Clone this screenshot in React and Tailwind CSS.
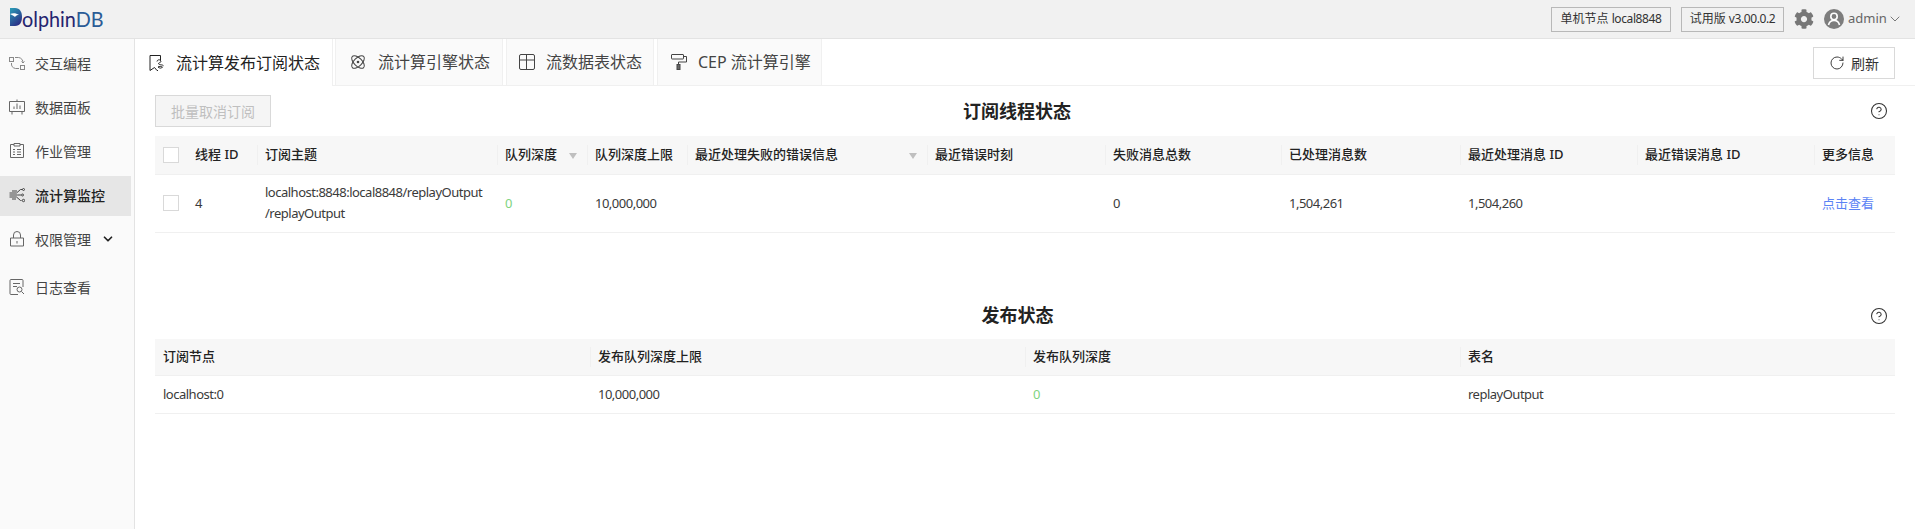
import React from "react";
import { ChevronDown, CircleHelp, RotateCw } from "lucide-react";
import { FaCog } from "react-icons/fa";

const font = { fontFamily: '"Noto Sans", "Noto Sans CJK SC", sans-serif' };

const Ic = ({ children, className = "w-4 h-4", stroke = "#666" }) => (
  <svg viewBox="0 0 16 16" fill="none" stroke={stroke} strokeWidth="1" className={`shrink-0 ${className}`}>
    {children}
  </svg>
);

const IconCode = () => (
  <Ic stroke="#888">
    <rect x="0.5" y="2.5" width="4" height="4" />
    <rect x="11.5" y="10.5" width="4" height="4" />
    <path d="M6 2.5h3.5a5 5 0 0 1 4.5 5.5M14 8l1.5-1.5M14 8l-1.5-1.5M2.500 8a5 5 0 0 0 4 5.500h3.500" />
  </Ic>
);
const IconBoard = () => (
  <Ic>
    <path d="M8 0.5v2M0.5 2.5h15v10h-15zM3 12.5v3M13 12.5v3M5 10V7.5M8 10V4.5M11 10V6.5" />
  </Ic>
);
const IconJobs = () => (
  <Ic>
    <path d="M5 1.5H1.5v13h13v-13H11M5 0.5h6v2.5H5zM4 6.5h2M8 6.5h4M4 9h2M8 9h4M4 11.5h2M8 11.5h4" />
  </Ic>
);
const IconFlow = () => (
  <Ic stroke="#444">
    <path d="M0.5 6h7l4-3.500h2M0.500 8h8l3.500 0M0.500 10h7l4 3.500h1M3 4h5M3 12h4" />
    <circle cx="14.5" cy="2.5" r="1" />
    <circle cx="13.5" cy="8" r="1" />
    <circle cx="14.5" cy="13.5" r="1.2" />
  </Ic>
);
const IconLock = () => (
  <Ic>
    <path d="M4.5 7V4a3.5 3.5 0 0 1 7 0v3M1.5 7h13v8h-13zM8 10v2.5" />
  </Ic>
);
const IconLog = () => (
  <Ic>
    <path d="M14 8V1.5a1 1 0 0 0-1-1H2a1 1 0 0 0-1 1v13a1 1 0 0 0 1 1h7M4 4.5h7M4 7.5h4" />
    <circle cx="10.5" cy="10.5" r="2.5" />
    <path d="M12.5 12.5l2.5 2.5" />
  </Ic>
);
const IconDoc = () => (
  <Ic stroke="#222">
    <path d="M11.500 5.500V0.500H1v15l4.500-3 2.500 3h1" />
    <path d="M8 6.500a2 2 0 0 1 3.500-1c1 1 0 2-1 2.200s-1.500 1.300 0 1.800c1.200.4 3 .2 4 1.200M9 12c1.500-.8 3-.8 4.500 0-1 1.500-2.500 1.500-4.500 0z" />
  </Ic>
);
const IconAtom = () => (
  <Ic stroke="#444">
    <ellipse cx="8" cy="8" rx="8" ry="4" transform="rotate(45 8 8)" />
    <ellipse cx="8" cy="8" rx="8" ry="4" transform="rotate(-45 8 8)" />
    <circle cx="8" cy="8" r="1.300" fill="#444" stroke="none" />
  </Ic>
);
const IconTable = () => (
  <Ic stroke="#444">
    <rect x="0.5" y="0.5" width="15" height="15" rx="1.5" />
    <path d="M0.5 6h15M7.500 0.500v15" />
  </Ic>
);
const IconRoller = () => (
  <Ic stroke="#444">
    <rect x="0.5" y="0.5" width="12" height="4.500" rx="0.5" />
    <path d="M12.500 2.500h3v5.500H7.500v2.500" />
    <rect x="6" y="10.500" width="3" height="5" fill="#666" />
  </Ic>
);
const IconUser = () => (
  <svg viewBox="0 0 20 20" className="w-5 h-5 shrink-0">
    <circle cx="10" cy="10" r="10" fill="#7d7d7d" />
    <circle cx="10" cy="7.5" r="3.2" fill="none" stroke="#fff" strokeWidth="1.6" />
    <path d="M4.500 16c.6-3 2.700-4.500 5.500-4.500s4.900 1.500 5.500 4.500" fill="none" stroke="#fff" strokeWidth="1.6" />
  </svg>
);
const Logo = () => (
  <div className="flex items-start h-[24px] w-[96px]">
    <svg viewBox="0 0 12 18" className="w-[12px] h-[18px] shrink-0 mt-[1px]">
      <defs>
        <linearGradient id="lg" x1="0" y1="0" x2="0.6" y2="1">
          <stop offset="0" stopColor="#2a9fb8" />
          <stop offset="1" stopColor="#2a2f86" />
        </linearGradient>
      </defs>
      <path d="M0 0h5c5 0 7 4 7 9s-2 9-7 9H0z" fill="url(#lg)" />
      <path d="M0 6c3-1 6-1 9 1-2 0-3 .5-4 2C4 8 2 7 0 6z" fill="#fff" />
    </svg>
    <span className="text-[22px] leading-[24px] text-[#25246f] inline-block origin-left scale-x-[0.9] whitespace-nowrap" style={{ fontFamily: '"Lato", sans-serif' }}>
      olphin<span className="text-[#2b5c96]">DB</span>
    </span>
  </div>
);

const nav = [
  { label: "交互编程", icon: IconCode },
  { label: "数据面板", icon: IconBoard },
  { label: "作业管理", icon: IconJobs },
  { label: "流计算监控", icon: IconFlow, active: true },
  { label: "权限管理", icon: IconLock, chevron: true },
  { label: "日志查看", icon: IconLog, last: true },
];

const Sep = () => <span className="absolute left-0 top-[9px] h-[20px] w-px bg-[#f0f0f0]" />;
const Sort = () => (
  <svg viewBox="0 0 8 6" className="w-2 h-[6px] absolute right-[10px] top-[17px]">
    <path d="M0 0h8L4 6z" fill="#bfbfbf" />
  </svg>
);
const Check = () => <span className="block w-4 h-4 border border-[#d9d9d9] bg-white" />;

const topCols = [
  { w: "w-[70px]", t: "线程 ID" },
  { w: "w-[240px]", t: "订阅主题", sep: true },
  { w: "w-[90px]", t: "队列深度", sep: true, sort: true },
  { w: "w-[100px]", t: "队列深度上限", sep: true },
  { w: "w-[240px]", t: "最近处理失败的错误信息", sep: true, sort: true },
  { w: "w-[178px]", t: "最近错误时刻", sep: true },
  { w: "w-[176px]", t: "失败消息总数", sep: true },
  { w: "w-[179px]", t: "已处理消息数", sep: true },
  { w: "w-[177px]", t: "最近处理消息 ID", sep: true },
  { w: "w-[177px]", t: "最近错误消息 ID", sep: true },
  { w: "w-[81px]", t: "更多信息", sep: true },
];

const Td = ({ children, className = "" }) => (
  <td className={`px-2 text-[13px] leading-[21px] tracking-[-0.5px] text-[#3a3a3a] whitespace-nowrap ${className}`}>{children}</td>
);

export default function App() {
  return (
    <div className="h-screen w-full overflow-hidden flex flex-col bg-white" style={font}>
      <header className="h-[39px] shrink-0 bg-[#f1f1f1] border-b border-[#e3e3e3] flex items-center pl-[10px] pr-[12px]">
        <Logo />
        <div className="ml-auto flex items-center">
          <span className="h-[25px] w-[120px] border border-[#b8b8b8] flex items-center justify-center text-[12px] text-[#333] whitespace-nowrap">
            单机节点&nbsp;<span className="tracking-[-0.4px]">local8848</span>
          </span>
          <span className="ml-[10px] h-[25px] w-[103px] border border-[#b8b8b8] flex items-center justify-center text-[12px] text-[#333] whitespace-nowrap">
            试用版&nbsp;<span className="tracking-[-0.4px]">v3.00.0.2</span>
          </span>
          <FaCog className="ml-[10px] w-5 h-5 text-[#777]" />
          <span className="ml-[10px]"><IconUser /></span>
          <span className="ml-1 w-[37px] text-[13px] text-[#666]">admin</span>
          <ChevronDown className="ml-[2px] w-4 h-4 text-[#666]" strokeWidth={1.3} />
        </div>
      </header>

      <div className="flex-1 flex min-h-0">
        <aside className="w-[135px] shrink-0 bg-[#fafafa] border-r border-[#e3e3e3] pr-[3px] pt-[5px]">
          {nav.map(({ label, icon: I, active, chevron, last }) => (
            <div
              key={label}
              className={`h-[40px] flex items-center pl-[9px] pb-[2px] gap-[10px] text-[14px] ${last ? "mt-2" : "mb-1"} ${
                active ? "bg-[#e6e6e6] text-[#222] font-medium" : "text-[#444]"
              }`}
            >
              <I />
              <span className="whitespace-nowrap">{label}</span>
              {chevron && <ChevronDown className="w-[14px] h-[14px] text-[#222]" strokeWidth={3} />}
            </div>
          ))}
        </aside>

        <main className="flex-1 min-w-0">
          <div className="h-[47px] border-b border-[#f0f0f0] flex items-start relative">
            <div className="w-[198px] h-[47px] bg-white border-r border-[#f0f0f0] flex items-center pl-[14px] gap-[11px] text-[16px] text-[#222] z-10">
              <IconDoc />
              <span className="whitespace-nowrap">流计算发布订阅状态</span>
            </div>
            <div className="ml-[2px] w-[168px] h-[46px] bg-[#fafafa] border-x border-[#f0f0f0] flex items-center pl-[14px] gap-[12px] text-[16px] text-[#444]">
              <IconAtom />
              <span className="whitespace-nowrap">流计算引擎状态</span>
            </div>
            <div className="ml-[3px] w-[148px] h-[46px] bg-[#fafafa] border-x border-[#f0f0f0] flex items-center pl-[12px] gap-[11px] text-[16px] text-[#444]">
              <IconTable />
              <span className="whitespace-nowrap">流数据表状态</span>
            </div>
            <div className="ml-[3px] w-[165px] h-[46px] bg-[#fafafa] border-x border-[#f0f0f0] flex items-center pl-[13px] gap-[11px] text-[16px] text-[#444]">
              <IconRoller />
              <span className="whitespace-nowrap">CEP 流计算引擎</span>
            </div>
            <button className="ml-auto mr-5 mt-2 w-[82px] h-[32px] border border-[#d9d9d9] bg-white flex items-center justify-center gap-[6px] text-[14px] text-[#333]">
              <RotateCw className="w-4 h-4" strokeWidth={1.4} />
              刷新
            </button>
          </div>

          <div className="px-5 pt-[9px]">
            <div className="flex items-center h-[32px]">
              <button className="w-[116px] h-[32px] shrink-0 border border-[#d9d9d9] bg-[#f5f5f5] text-[14px] text-[#bfbfbf]">
                批量取消订阅
              </button>
              <h2 className="flex-1 pr-[107px] text-center text-[18px] font-bold text-[#222]">订阅线程状态</h2>
              <CircleHelp className="w-[18px] h-[18px] mr-[7px] text-[#333]" strokeWidth={1.4} />
            </div>

            <table className="mt-[9px] w-full table-fixed border-collapse">
              <thead>
                <tr className="h-[38px] bg-[#f7f7f7] border-b border-[#f0f0f0]">
                  <th className="w-[32px] px-2"><Check /></th>
                  {topCols.map((c) => (
                    <th key={c.t} className={`${c.w} relative px-2 text-left text-[13px] font-medium text-[#222] whitespace-nowrap`}>
                      {c.sep && <Sep />}
                      {c.t}
                      {c.sort && <Sort />}
                    </th>
                  ))}
                </tr>
              </thead>
              <tbody>
                <tr className="h-[58px] border-b border-[#f0f0f0]">
                  <td className="px-2"><Check /></td>
                  <Td>4</Td>
                  <Td>
                    localhost:8848:local8848/replayOutput
                    <br />
                    /replayOutput
                  </Td>
                  <Td className="text-[#7fd47f]">0</Td>
                  <Td>10,000,000</Td>
                  <Td />
                  <Td />
                  <Td>0</Td>
                  <Td>1,504,261</Td>
                  <Td>1,504,260</Td>
                  <Td />
                  <Td className="text-[#5b83f5] tracking-normal">点击查看</Td>
                </tr>
              </tbody>
            </table>

            <div className="flex items-center h-[24px] mt-[71px]">
              <h2 className="flex-1 pl-[10px] text-center text-[18px] font-bold text-[#222]">发布状态</h2>
              <CircleHelp className="w-[18px] h-[18px] mr-[7px] text-[#333]" strokeWidth={1.4} />
            </div>

            <table className="mt-[11px] w-full table-fixed border-collapse">
              <thead>
                <tr className="h-[37px] bg-[#f7f7f7] border-b border-[#f0f0f0]">
                  {["订阅节点", "发布队列深度上限", "发布队列深度", "表名"].map((t, i) => (
                    <th key={t} className="relative px-2 text-left text-[13px] font-medium text-[#222]">
                      {i > 0 && <span className="absolute left-0 top-[8px] h-[20px] w-px bg-[#f0f0f0]" />}
                      {t}
                    </th>
                  ))}
                </tr>
              </thead>
              <tbody>
                <tr className="h-[38px] border-b border-[#f0f0f0]">
                  <Td>localhost:0</Td>
                  <Td>10,000,000</Td>
                  <Td className="text-[#7fd47f]">0</Td>
                  <Td>replayOutput</Td>
                </tr>
              </tbody>
            </table>
          </div>
        </main>
      </div>
    </div>
  );
}
